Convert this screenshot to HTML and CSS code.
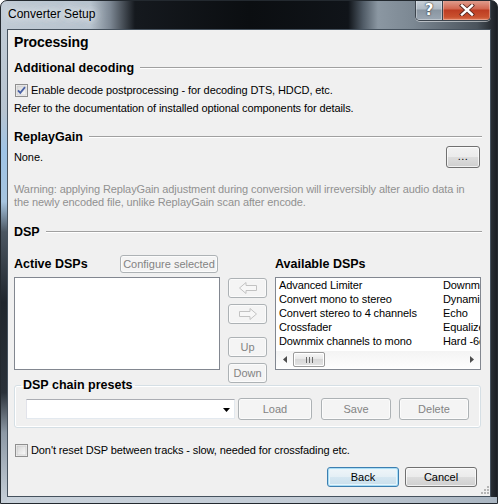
FILE: index.html
```html
<!DOCTYPE html>
<html>
<head>
<meta charset="utf-8">
<title>Converter Setup</title>
<link rel="stylesheet" href="styles.css">
</head>
<body>
<div class="window">
  <div class="titlebar">
    <span class="title">Converter Setup</span>
    <div class="caption-btns">
      <span class="cap help">?</span>
      <span class="cap close"><svg width="16" height="12" viewBox="0 0 16 12"><path d="M3 1.5 L13 10.5 M13 1.5 L3 10.5" stroke="#5a2a22" stroke-width="4.2" stroke-linecap="square"/><path d="M3 1.5 L13 10.5 M13 1.5 L3 10.5" stroke="#fff" stroke-width="2.4" stroke-linecap="square"/></svg></span>
    </div>
  </div>
  <div class="client">
    <div class="page-title">Processing</div>
    <div class="sec"><span>Additional decoding</span></div>
    <div class="check-row">
      <span class="cb"><svg width="13" height="13" viewBox="0 0 13 13"><rect x="0.5" y="0.5" width="12" height="12" fill="#f4f4f4" stroke="#8f8f8f"/><rect x="2" y="2" width="9" height="9" fill="url(#cbg)" stroke="#c4c4c4" stroke-width="0.6"/><defs><linearGradient id="cbg" x1="0" y1="0" x2="1" y2="1"><stop offset="0" stop-color="#d6d6d6"/><stop offset="1" stop-color="#fbfbfb"/></linearGradient></defs><path d="M3 6.3 L5.3 8.8 L10 3.2" fill="none" stroke="#4a62a6" stroke-width="1.8"/></svg></span>
      <span>Enable decode postprocessing - for decoding DTS, HDCD, etc.</span>
    </div>
    <div class="note">Refer to the documentation of installed optional components for details.</div>
    <div class="sec"><span>ReplayGain</span></div>
    <div class="rg-row"><span>None.</span><button class="btn dots">...</button></div>
    <div class="warn">Warning: applying ReplayGain adjustment during conversion will irreversibly alter audio data in<br>the newly encoded file, unlike ReplayGain scan after encode.</div>
    <div class="sec"><span>DSP</span></div>
    <div class="dsp">
      <div class="dsp-head"><span class="sub">Active DSPs</span><button class="btn dis cfg">Configure selected</button></div>
      <div></div>
      <div class="dsp-head"><span class="sub">Available DSPs</span></div>
      <div class="list"></div>
      <div class="mid">
        <button class="btn dis arrow"><svg width="20" height="14" viewBox="0 0 20 14"><path d="M1.5 7 L8 1.5 V4.5 H18.5 V9.5 H8 V12.5 Z" fill="#f7f7f7" stroke="#c2c2c2"/></svg></button>
        <button class="btn dis arrow"><svg width="20" height="14" viewBox="0 0 20 14"><path d="M18.5 7 L12 1.5 V4.5 H1.5 V9.5 H12 V12.5 Z" fill="#f7f7f7" stroke="#c2c2c2"/></svg></button>
        <button class="btn dis updown up">Up</button>
        <button class="btn dis updown">Down</button>
      </div>
      <div class="list avail">
        <div class="items">
          <div class="col">
            <div>Advanced Limiter</div>
            <div>Convert mono to stereo</div>
            <div>Convert stereo to 4 channels</div>
            <div>Crossfader</div>
            <div>Downmix channels to mono</div>
          </div>
          <div class="col">
            <div>Downmix channels to stereo</div>
            <div>Dynamic Range Compressor</div>
            <div>Echo</div>
            <div>Equalizer</div>
            <div>Hard -6dB limiter</div>
          </div>
        </div>
        <div class="hscroll">
          <span class="sarr"><svg width="4" height="7" viewBox="0 0 4 7"><path d="M4 0 L0 3.5 L4 7 Z" fill="#4d4d4d"/></svg></span>
          <span class="thumb"><svg width="7" height="6" viewBox="0 0 7 6"><path d="M0.5 0 V6 M3.5 0 V6 M6.5 0 V6" stroke="#6a6a6a"/></svg></span>
          <span class="track"></span>
          <span class="sarr"><svg width="4" height="7" viewBox="0 0 4 7"><path d="M0 0 L4 3.5 L0 7 Z" fill="#4d4d4d"/></svg></span>
        </div>
      </div>
    </div>
    <fieldset class="presets">
      <legend>DSP chain presets</legend>
      <div class="preset-row">
        <div class="combo"><svg width="7" height="4" viewBox="0 0 7 4"><path d="M0 0 H7 L3.5 4 Z" fill="#000"/></svg></div>
        <button class="btn dis load">Load</button>
        <button class="btn dis save">Save</button>
        <button class="btn dis del">Delete</button>
      </div>
    </fieldset>
    <div class="check-row reset">
      <span class="cb"><svg width="13" height="13" viewBox="0 0 13 13"><rect x="0.5" y="0.5" width="12" height="12" fill="#f4f4f4" stroke="#8f8f8f"/><rect x="2" y="2" width="9" height="9" fill="url(#cbg2)" stroke="#c4c4c4" stroke-width="0.6"/><defs><linearGradient id="cbg2" x1="0" y1="0" x2="1" y2="1"><stop offset="0" stop-color="#d6d6d6"/><stop offset="1" stop-color="#fbfbfb"/></linearGradient></defs></svg></span>
      <span>Don't reset DSP between tracks - slow, needed for crossfading etc.</span>
    </div>
    <div class="actions">
      <button class="btn default">Back</button>
      <button class="btn">Cancel</button>
    </div>
    <svg class="grip" width="8" height="8" viewBox="0 0 8 8"><g fill="#b5b5b5"><rect x="6" y="0" width="2" height="2"/><rect x="3" y="3" width="2" height="2"/><rect x="6" y="3" width="2" height="2"/><rect x="0" y="6" width="2" height="2"/><rect x="3" y="6" width="2" height="2"/><rect x="6" y="6" width="2" height="2"/></g></svg>
  </div>
</div>
</body>
</html>
```

FILE: styles.css
```css
* { box-sizing: border-box; }
html, body { margin: 0; padding: 0; }
body {
  width: 498px;
  height: 504px;
  overflow: hidden;
  background: #ffffff;
  font-family: "Liberation Sans", Arial, sans-serif;
}

.window {
  width: 498px;
  height: 504px;
  border: 1px solid #23292f;
  border-radius: 7px 7px 0 0;
  display: flex;
  flex-direction: column;
  overflow: hidden;
  background:
    linear-gradient(to bottom, #c3cdd7 0, #b7c4d0 22%, #9fc4e6 30%, #a6c4df 40%, #4b5661 46%, #20262d 60%, #2a3139 78%, #8d99a5 86%, #c7d0d9 100%) left top / 6px 100% no-repeat,
    linear-gradient(to right, #c9d2db, #c3ccd6 60%, #aab6c2) left bottom / 100% 6px no-repeat,
    linear-gradient(to right, #c0cad4 0, #b8c3ce 18%, #7d8894 22%, #15191e 27%, #0b0e11 50%, #101419 70%, #505b66 73%, #8b97a2 76%, #7c8893 83%, #4a535c 96%, #1a1e23 100%);
}

.titlebar {
  height: 28px;
  display: flex;
  justify-content: space-between;
  align-items: flex-start;
  flex: none;
}
.title {
  margin: 6px 0 0 7px;
  font-size: 12px;
  line-height: 15px;
  color: #000;
  text-shadow: 0 0 6px rgba(235,240,245,0.95), 0 0 10px rgba(235,240,245,0.9), 0 0 14px rgba(235,240,245,0.8);
}
.caption-btns {
  display: flex;
  margin: -1px 6px 0 0;
  border: 1px solid #3c444d;
  border-top: none;
  border-radius: 0 0 5px 5px;
  overflow: hidden;
  box-shadow: 0 1px 0 rgba(255,255,255,0.5);
}
.cap {
  height: 20px;
  display: flex;
  align-items: center;
  justify-content: center;
}
.help {
  width: 27px;
  background: linear-gradient(#c9d1d9 0, #aeb9c4 45%, #8995a1 50%, #9ba7b3 100%);
  border-right: 1px solid #3c444d;
  color: #fff;
  font: bold 15px "DejaVu Sans", sans-serif;
  text-shadow: 0 0 2px #2b3137, 0 0 1px #2b3137;
  box-shadow: inset 0 0 0 1px rgba(255,255,255,0.35);
}
.close {
  width: 47px;
  background: linear-gradient(#e1a394 0, #d1664f 45%, #bd3c22 50%, #c9512f 85%, #dc7a5a 100%);
  box-shadow: inset 0 0 0 1px rgba(255,220,210,0.4);
}

.client {
  flex: 1;
  margin: 0 6px 6px 6px;
  border: 1px solid #46525e;
  background: #f0f0f0;
  padding: 0 8px 0 6px;
  position: relative;
  font-size: 11px;
  letter-spacing: -0.1px;
  color: #000;
}

.page-title {
  height: 24px;
  line-height: 24px;
  font-weight: bold;
  font-size: 14px;
  letter-spacing: -0.1px;
}

.sec {
  height: 16px;
  margin-top: 6px;
  display: flex;
  align-items: center;
  font-weight: bold;
  font-size: 12.5px;
  letter-spacing: 0;
}
.sec::after {
  content: "";
  flex: 1;
  border-top: 1px solid #a0a0a0;
  border-bottom: 1px solid #ffffff;
  margin-left: 6px;
}

.check-row {
  height: 14px;
  margin-top: 7px;
  display: flex;
  align-items: center;
  white-space: nowrap;
}
.cb {
  width: 13px;
  height: 13px;
  margin: 0 3px 0 1px;
  display: flex;
}
.note {
  height: 14px;
  line-height: 14px;
  margin-top: 4px;
  white-space: nowrap;
}
.note + .sec { margin-top: 14px; }

.rg-row {
  margin-top: 1px;
  height: 22px;
  display: flex;
  justify-content: space-between;
  align-items: center;
  padding-right: 2px;
}

.warn {
  margin-top: 15px;
  line-height: 13px;
  color: #919191;
  white-space: nowrap;
}
.warn + .sec { margin-top: 15px; }

.btn {
  font-family: "Liberation Sans", Arial, sans-serif;
  font-size: 11px;
  letter-spacing: 0;
  color: #000;
  border: 1px solid #707070;
  border-radius: 3px;
  background: linear-gradient(#f2f2f2 0, #ebebeb 50%, #dddddd 50%, #cfcfcf 100%);
  box-shadow: inset 0 0 0 1px rgba(255,255,255,0.7);
  padding: 0;
  margin: 0;
  display: flex;
  align-items: center;
  justify-content: center;
}
.btn.dis {
  border-color: #adb2b5;
  background: #f4f4f4;
  color: #838383;
  box-shadow: inset 0 0 0 1px #fbfbfb;
}
.btn.default {
  border-color: #3c7fb1;
  background: linear-gradient(#f0f6f9 0, #e4eff5 50%, #d6e7f1 50%, #c9dfec 100%);
  box-shadow: inset 0 0 0 1px #a9dcf4, inset 0 0 0 2px #e6f5fc;
}
.dots {
  width: 34px;
  height: 22px;
  letter-spacing: 0.5px;
  padding-bottom: 2px;
}

.dsp {
  margin-top: 15px;
  display: grid;
  grid-template-columns: 206px 55px 206px;
  grid-template-rows: 18px 93px;
  row-gap: 4px;
}
.dsp-head {
  display: flex;
  justify-content: space-between;
  align-items: center;
}
.sub {
  font-weight: bold;
  font-size: 12.5px;
  letter-spacing: 0;
}
.cfg {
  width: 98px;
  height: 18px;
  margin-right: 2px;
}
.list {
  background: #fff;
  border: 1px solid #828790;
}
.mid {
  display: flex;
  flex-direction: column;
  padding: 1px 0 0 8px;
}
.arrow, .updown {
  width: 39px;
  height: 20px;
  flex: none;
}
.arrow + .arrow { margin-top: 6px; }
.updown.up { margin-top: 13px; }
.updown + .updown { margin-top: 6px; }

.avail {
  display: flex;
  flex-direction: column;
  overflow: hidden;
}
.items {
  flex: 1;
  display: flex;
  padding-left: 3px;
  overflow: hidden;
  white-space: nowrap;
}
.items .col {
  line-height: 14px;
}
.items .col:first-child { width: 164px; flex: none; }
.hscroll {
  height: 17px;
  flex: none;
  display: flex;
  align-items: stretch;
  background: linear-gradient(#f4f4f4, #fdfdfd);
  margin-bottom: 1px;
}
.sarr {
  width: 17px;
  display: flex;
  align-items: center;
  justify-content: center;
  flex: none;
}
.thumb {
  width: 32px;
  margin: 1px 0;
  flex: none;
  border: 1px solid #9b9b9b;
  border-radius: 2px;
  background: linear-gradient(#f8f8f8, #e6e6e6 50%, #d8d8d8 50%, #e4e4e4);
  box-shadow: inset 0 0 0 1px #fff;
  display: flex;
  align-items: center;
  justify-content: center;
}
.track { flex: 1; }

.presets {
  margin: 7px 1px 0 0;
  padding: 5px 10px 7px 11px;
  border: 1px solid #d5dfe5;
  border-radius: 3px;
  box-shadow: inset 0 0 0 1px #fff;
  min-width: 0;
}
.presets legend {
  font-weight: bold;
  font-size: 12.5px;
  letter-spacing: 0;
  line-height: 16px;
  padding: 0 2px;
  margin-left: -5px;
}
.preset-row {
  height: 22px;
  display: flex;
  align-items: center;
}
.combo {
  width: 209px;
  height: 20px;
  background: #fff;
  border: 1px solid #abadb3;
  border-color: #abadb3 #e3e9ef #e3e9ef #e2e3ea;
  display: flex;
  justify-content: flex-end;
  align-items: center;
  padding: 1px 4px 0 0;
}
.load { width: 74px; height: 22px; margin-left: 3px; }
.save { width: 70px; height: 22px; margin-left: 9px; }
.del { width: 70px; height: 22px; margin-left: 8px; }

.reset { margin-top: 15px; }

.actions {
  margin-top: 10px;
  display: flex;
  justify-content: flex-end;
  gap: 6px;
  padding-right: 5px;
}
.actions .btn {
  width: 72px;
  height: 20px;
}

.grip {
  position: absolute;
  right: 1px;
  bottom: 2px;
}
```
